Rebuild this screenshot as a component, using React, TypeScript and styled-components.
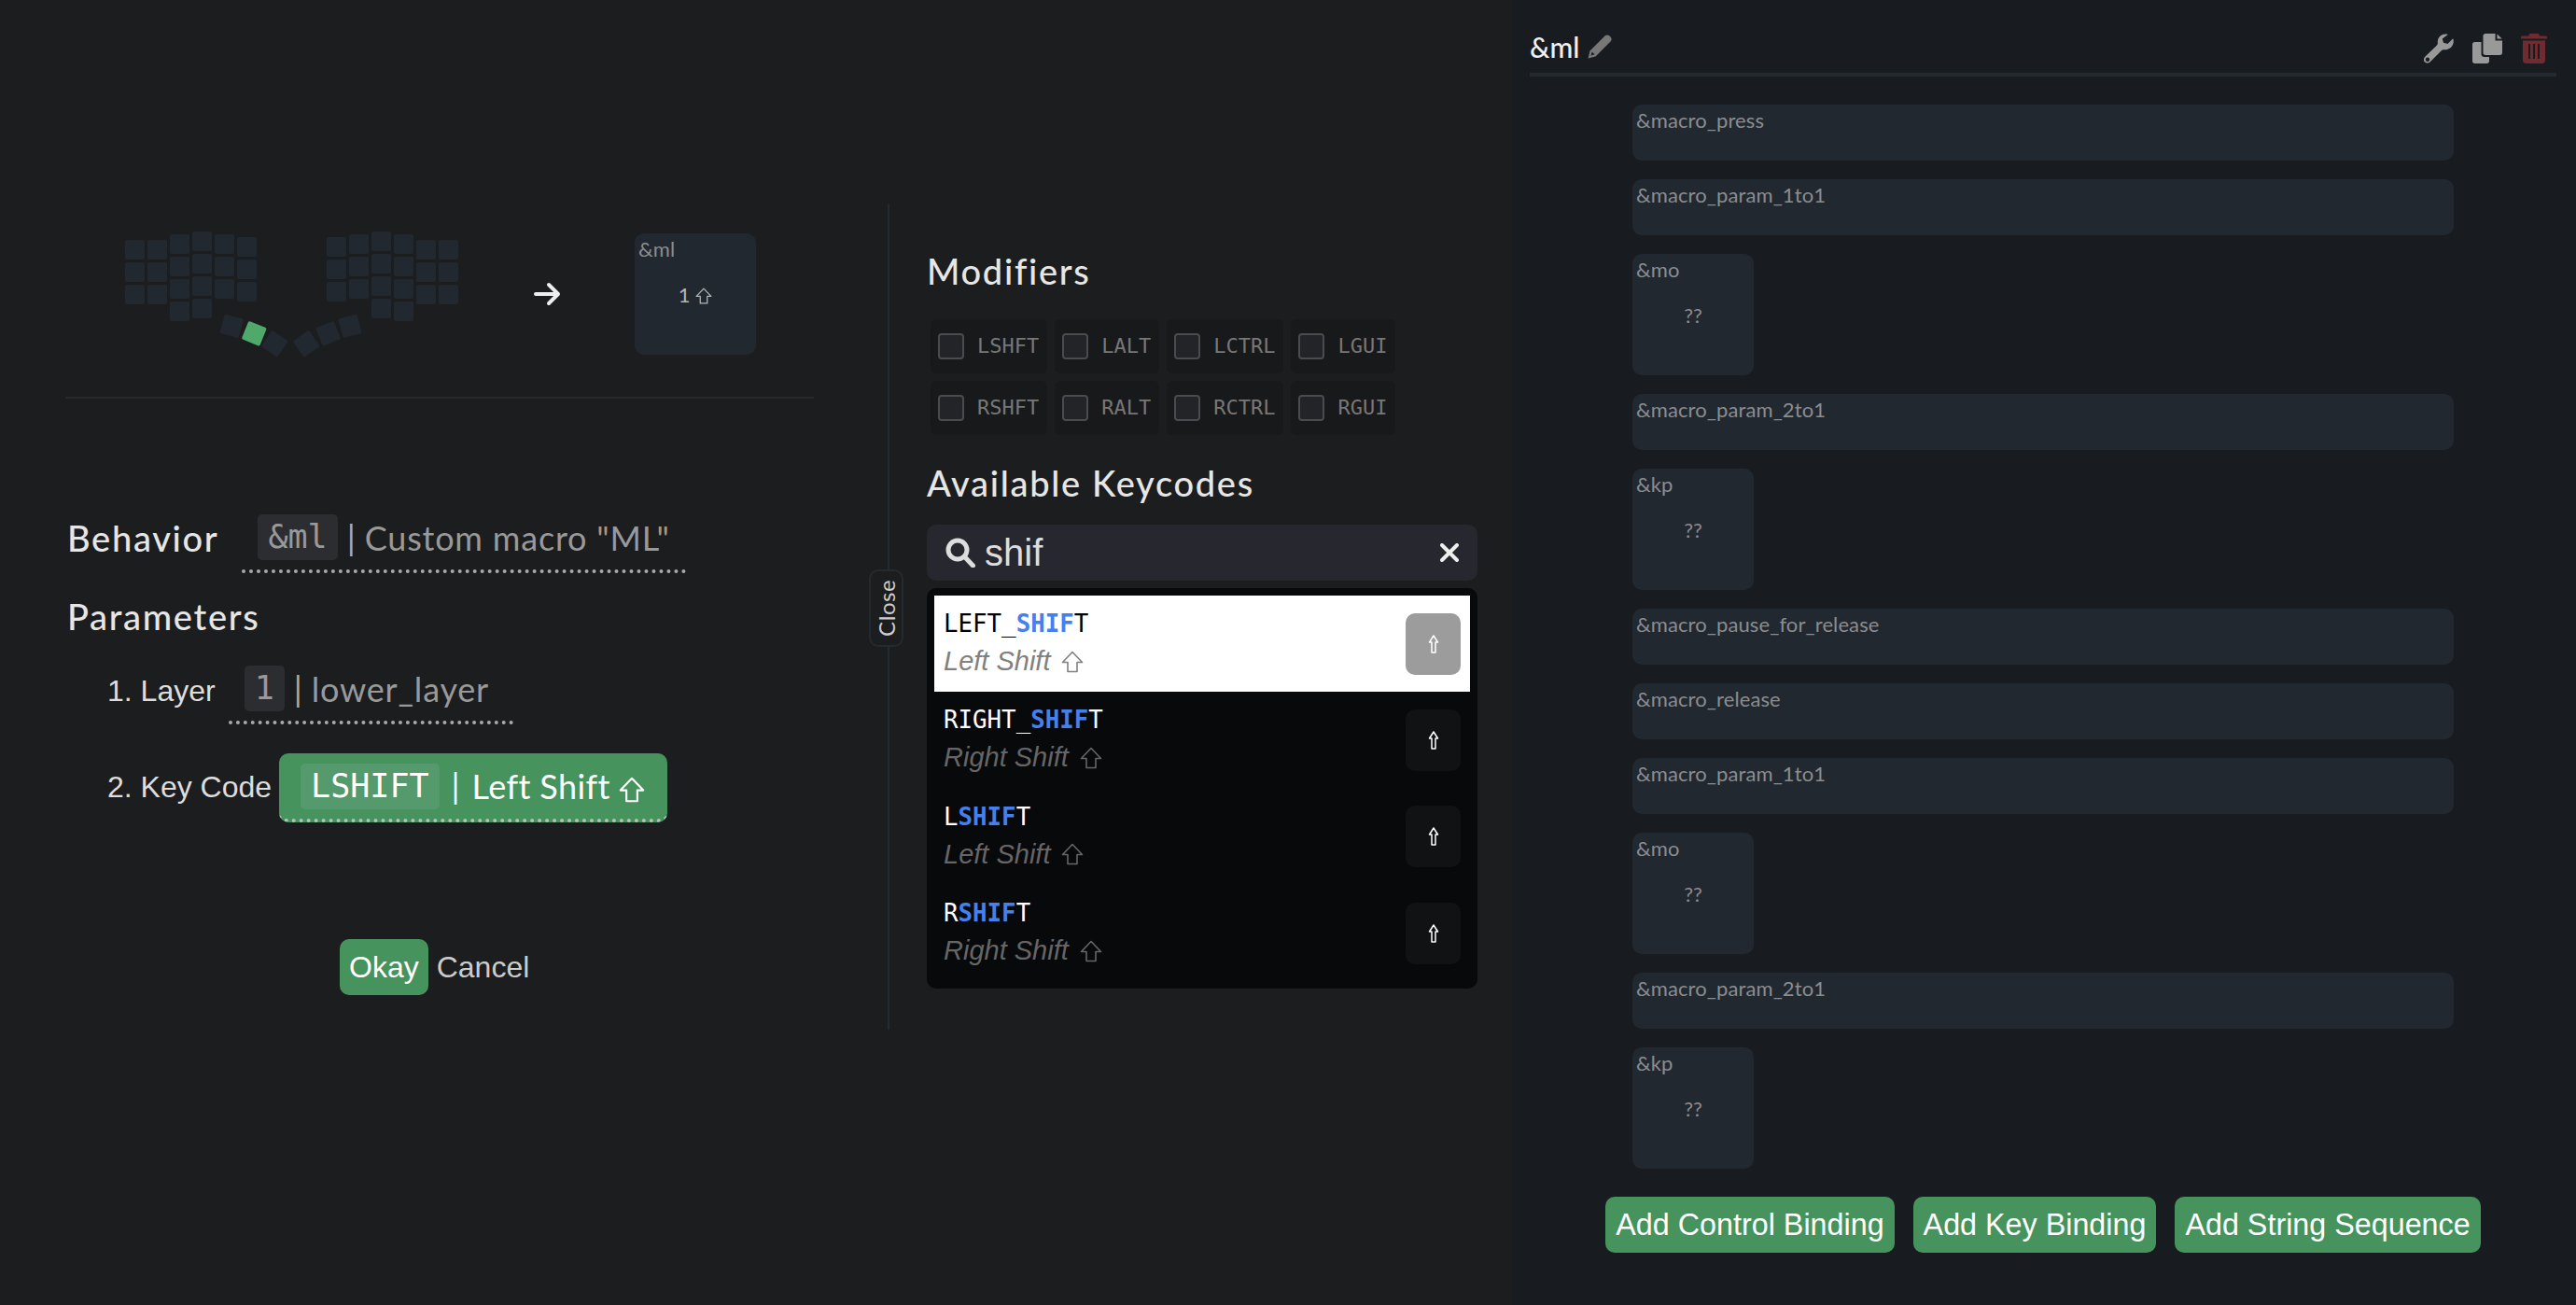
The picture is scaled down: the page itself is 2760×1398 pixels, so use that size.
import { FC } from 'react';
import styled, { createGlobalStyle } from 'styled-components';

const heading = `'Lato', 'Noto Sans', sans-serif`;
const body = `'Liberation Sans', Arial, sans-serif`;
const mono = `'DejaVu Sans Mono', monospace`;
const green = '#46935e';
const tile = '#222830';

const GlobalStyle = createGlobalStyle`
	* {
		box-sizing: border-box;
	}
	html,
	body {
		margin: 0;
		background: #1c1d1f;
	}
`;

const modifiers = [
	['LSHFT', 'LALT', 'LCTRL', 'LGUI'],
	['RSHFT', 'RALT', 'RCTRL', 'RGUI'],
];

const results = [
	{ before: 'LEFT_', after: 'T', label: 'Left Shift' },
	{ before: 'RIGHT_', after: 'T', label: 'Right Shift' },
	{ before: 'L', after: 'T', label: 'Left Shift' },
	{ before: 'R', after: 'T', label: 'Right Shift' },
];

const bindings = [
	{ name: '&macro_press', wide: true },
	{ name: '&macro_param_1to1', wide: true },
	{ name: '&mo', wide: false },
	{ name: '&macro_param_2to1', wide: true },
	{ name: '&kp', wide: false },
	{ name: '&macro_pause_for_release', wide: true },
	{ name: '&macro_release', wide: true },
	{ name: '&macro_param_1to1', wide: true },
	{ name: '&mo', wide: false },
	{ name: '&macro_param_2to1', wide: true },
	{ name: '&kp', wide: false },
];

const leftColumns = [
	{ x: 134, y: 257, rows: 3 },
	{ x: 158, y: 257, rows: 3 },
	{ x: 182, y: 251, rows: 4 },
	{ x: 206, y: 248, rows: 4 },
	{ x: 230, y: 251, rows: 3 },
	{ x: 254, y: 254, rows: 3 },
];
const rightColumns = [
	{ x: 350, y: 254, rows: 3 },
	{ x: 374, y: 251, rows: 3 },
	{ x: 398, y: 248, rows: 4 },
	{ x: 422, y: 251, rows: 4 },
	{ x: 446, y: 257, rows: 3 },
	{ x: 470, y: 257, rows: 3 },
];
const thumbs = [
	{ x: 248.3, y: 349.3, angle: 15 },
	{ x: 272.3, y: 357.3, angle: 22, active: true },
	{ x: 294.3, y: 368.3, angle: 35 },
	{ x: 328.3, y: 368.3, angle: -35 },
	{ x: 351.7, y: 357.3, angle: -22 },
	{ x: 375, y: 349.3, angle: -15 },
];

const KeymapDrawing: FC = () => (
	<svg width="366" height="140" viewBox="130 245 366 140">
		{[...leftColumns, ...rightColumns].map((col) =>
			Array.from({ length: col.rows }).map((_, i) => (
				<rect key={`${col.x}-${i}`} x={col.x} y={col.y + i * 24} width="21" height="21" rx="2" fill={tile} />
			)),
		)}
		{thumbs.map((t) => (
			<rect
				key={t.x}
				x={t.x - 10.5}
				y={t.y - 10.5}
				width="21"
				height="21"
				rx="2"
				fill={t.active ? '#4fa96b' : tile}
				transform={`rotate(${t.angle} ${t.x} ${t.y})`}
			/>
		))}
	</svg>
);

// outlined shift arrow used next to key names
const ShiftIcon: FC<{ size: number; weight?: number }> = ({ size, weight = 1.6 }) => (
	<ShiftSvg width={size} height={size} viewBox="0 0 24 24" fill="none" stroke="currentColor" strokeWidth={weight} strokeLinejoin="round">
		<path d="M12 1.5L22.5 12.5H17V22.5H7V12.5H1.5Z" />
	</ShiftSvg>
);

const NarrowShiftIcon: FC = () => (
	<svg width="12" height="20" viewBox="0 0 12 20" fill="none" stroke="currentColor" strokeWidth="1.5" strokeLinejoin="round">
		<path d="M6 1L10.5 8H8V19H4V8H1.5Z" />
	</svg>
);

const ArrowIcon: FC = () => (
	<svg width="30" height="26" viewBox="0 0 30 26" fill="none" stroke="#eee" strokeWidth="4" strokeLinecap="round" strokeLinejoin="round">
		<path d="M3 13H27M17 3L27 13L17 23" />
	</svg>
);

const SearchIcon: FC = () => (
	<svg width="32" height="32" viewBox="0 0 32 32" fill="none" stroke="#ddd" strokeWidth="5" strokeLinecap="round">
		<circle cx="13" cy="13" r="10" />
		<path d="M21 21L29.5 30" />
	</svg>
);

const CloseIcon: FC = () => (
	<svg width="20" height="20" viewBox="0 0 20 20" fill="none" stroke="#eee" strokeWidth="4" strokeLinecap="round">
		<path d="M2 2L18 18M18 2L2 18" />
	</svg>
);

const PencilIcon: FC = () => (
	<svg width="28" height="28" viewBox="0 0 28 28">
		<path
			fill="#777"
			d="M19.5 2.5C21 1 23 1 24.5 2.5L25.5 3.5C27 5 27 7 25.5 8.5L9.5 24.5L1.5 26.5L3.5 18.5Z"
		/>
		<path fill="#181c20" d="M4.5 23.5L8.5 22.3L5.7 19.5Z" />
	</svg>
);

const WrenchIcon: FC = () => (
	<svg width="32" height="32" viewBox="0 0 32 32" fill="#999">
		<path
			fillRule="evenodd"
			d="M23 0.5C18 0.5 14.5 4.5 14.8 9.5C14.9 11 14.6 12 13.5 13L1.5 24.5C-0.5 26.5 -0.5 29 1 30.5C2.5 32 5 32 7 30L18.5 18.5C19.5 17.5 20.6 17.2 22 17.3C27.5 17.5 31.8 13.5 31.8 8C31.8 7 31.6 6 31.2 5.2L25.5 11L21 9.8L19.8 5.5L25.8 0.9C24.9 0.6 24 0.5 23 0.5ZM4 25.5A2.2 2.2 0 1 0 4 29.9A2.2 2.2 0 1 0 4 25.5Z"
		/>
	</svg>
);

const CopyIcon: FC = () => (
	<svg width="32" height="32" viewBox="0 0 32 32" fill="#999">
		<path d="M14 0H24.5V7.5H32V20.5C32 22 31 23 29.5 23H14C12.5 23 11.5 22 11.5 20.5V2.5C11.5 1 12.5 0 14 0ZM26.5 0.5L31.6 5.6H26.5Z" />
		<path d="M2.5 9H9.5V22C9.5 24 11 25 12.5 25H18V29.5C18 31 17 32 15.5 32H2.5C1 32 0 31 0 29.5V11.5C0 10 1 9 2.5 9Z" />
	</svg>
);

const TrashIcon: FC = () => (
	<svg width="28" height="32" viewBox="0 0 28 32" fill="#6f2b30">
		<path d="M10 0H18C19 0 19.5 0.6 19.5 1.5V2.5H26.5C27.4 2.5 28 3.2 28 4V5.5H0V4C0 3.2 0.6 2.5 1.5 2.5H8.5V1.5C8.5 0.6 9 0 10 0Z" />
		<path
			fillRule="evenodd"
			d="M2 7.5H26V28.5C26 30.5 24.8 32 22.5 32H5.5C3.2 32 2 30.5 2 28.5ZM8 11V27H10V11ZM13 11V27H15V11ZM18 11V27H20V11Z"
		/>
	</svg>
);

const App: FC = () => (
	<Shell>
		<GlobalStyle />
		<Editor>
			<Form>
				<Preview>
					<KeymapDrawing />
					<ArrowSlot>
						<ArrowIcon />
					</ArrowSlot>
					<BigKey>
						<KeyLabel>&amp;ml</KeyLabel>
						<KeyValue>
							1 <ShiftIcon size={18} weight={1.7} />
						</KeyValue>
					</BigKey>
				</Preview>
				<FieldRow>
					<Heading>Behavior</Heading>
					<Select $left={25} $right={17}>
						<Code>&amp;ml</Code>
						<Pipe>|</Pipe>
						<SelectText>Custom macro "ML"</SelectText>
					</Select>
				</FieldRow>
				<ParamsHeading>Parameters</ParamsHeading>
				<ParamRow>
					<ParamLabel $height={54}>1. Layer</ParamLabel>
					<Select $left={14} $right={26}>
						<Code>1</Code>
						<Pipe>|</Pipe>
						<SelectText>lower_layer</SelectText>
					</Select>
				</ParamRow>
				<ParamRow $second>
					<ParamLabel $height={72}>2. Key Code</ParamLabel>
					<ActiveSelect>
						<ActiveCode>LSHIFT</ActiveCode>
						<ActivePipe>|</ActivePipe>
						<ActiveText>
							Left Shift <ShiftIcon size={28} weight={1.8} />
						</ActiveText>
					</ActiveSelect>
				</ParamRow>
				<Actions>
					<OkayButton>Okay</OkayButton>
					<CancelButton>Cancel</CancelButton>
				</Actions>
			</Form>
			<Divider>
				<CloseTab>Close</CloseTab>
			</Divider>
			<Picker>
				<PickerHeading>Modifiers</PickerHeading>
				<ModifierGrid>
					{modifiers.map((row) => (
						<ModifierRow key={row[0]}>
							{row.map((mod) => (
								<ModifierChip key={mod}>
									<CheckBox />
									<ModifierName>{mod}</ModifierName>
								</ModifierChip>
							))}
						</ModifierRow>
					))}
				</ModifierGrid>
				<KeycodesHeading>Available Keycodes</KeycodesHeading>
				<SearchBox>
					<SearchIcon />
					<SearchText>shif</SearchText>
					<ClearSlot>
						<CloseIcon />
					</ClearSlot>
				</SearchBox>
				<ResultList>
					{results.map((item, i) => (
						<ResultRow key={item.before} $selected={i === 0}>
							<ResultText>
								<ResultCode>
									{item.before}
									<Match>SHIF</Match>
									{item.after}
								</ResultCode>
								<ResultLabel $selected={i === 0}>
									{item.label}
									<LabelArrow>
										<ShiftIcon size={24} />
									</LabelArrow>
								</ResultLabel>
							</ResultText>
							<ResultKey $selected={i === 0}>
								<NarrowShiftIcon />
							</ResultKey>
						</ResultRow>
					))}
				</ResultList>
			</Picker>
		</Editor>
		<Sidebar>
			<SidebarHeader>
				<TitleWrap>
					<Title>&amp;ml</Title>
					<PencilIcon />
				</TitleWrap>
				<HeaderIcons>
					<WrenchIcon />
					<CopyIcon />
					<TrashIcon />
				</HeaderIcons>
			</SidebarHeader>
			<BindingList>
				{bindings.map((b, i) => (
					<BindingTile key={i} $wide={b.wide}>
						<KeyLabel>{b.name}</KeyLabel>
						{!b.wide && <KeyValue $dim>??</KeyValue>}
					</BindingTile>
				))}
			</BindingList>
			<AddButtons>
				<GreenButton>Add Control Binding</GreenButton>
				<GreenButton>Add Key Binding</GreenButton>
				<GreenButton>Add String Sequence</GreenButton>
			</AddButtons>
		</Sidebar>
	</Shell>
);

const Shell = styled.div`
	display: flex;
	height: 1398px;
	overflow: hidden;
`;

const Editor = styled.main`
	display: flex;
	width: 1620px;
	padding: 218px 0 0 70px;
	background: #1c1d1f;
`;

const Form = styled.section`
	width: 802px;
`;

const Preview = styled.div`
	display: flex;
	align-items: center;
	height: 209px;
	padding: 32px 0 45px 60px;
	border-bottom: 2px solid #232a30;
`;

const ArrowSlot = styled.div`
	display: flex;
	margin: 0 79px 0 75px;
`;

const ShiftSvg = styled.svg`
	vertical-align: -0.12em;
`;

const BigKey = styled.div`
	position: relative;
	display: flex;
	align-items: center;
	justify-content: center;
	width: 130px;
	height: 130px;
	border-radius: 10px;
	background: ${tile};
`;

const KeyLabel = styled.span`
	position: absolute;
	top: 3px;
	left: 4px;
	font: 22px ${heading};
	letter-spacing: 0.1px;
	color: #8a8d90;
`;

const KeyValue = styled.span<{ $dim?: boolean }>`
	font: 22px ${heading};
	color: ${({ $dim }) => ($dim ? '#8a8d90' : '#b5b5b5')};
`;

const FieldRow = styled.div`
	display: flex;
	align-items: flex-start;
	margin: 124px 0 0 2px;
`;

const Heading = styled.h2`
	margin: 0;
	font: 500 38px/50px ${heading};
	letter-spacing: 1.7px;
	color: #e6e6e6;
`;

const ParamsHeading = styled(Heading)`
	margin: 21px 0 0 2px;
`;

const Select = styled.div<{ $left: number; $right: number }>`
	display: flex;
	align-items: center;
	gap: 10px;
	margin-left: ${({ $left }) => $left}px;
	padding: 0 ${({ $right }) => $right}px 10px 17px;
	border-bottom: 4px dotted #aaa;
`;

const Code = styled.code`
	padding: 0 11px;
	height: 49px;
	border-radius: 5px;
	background: #2c2d31;
	font: 35px/49px ${mono};
	color: #999;
`;

const Pipe = styled.span`
	font: 36px ${heading};
	color: #aaa;
`;

const SelectText = styled.span`
	font: 36px ${heading};
	letter-spacing: 0.8px;
	color: #999;
`;

const ParamRow = styled.div<{ $second?: boolean }>`
	display: flex;
	align-items: flex-start;
	margin: ${({ $second }) => ($second ? '31px' : '28px')} 0 0 45px;
`;

const ParamLabel = styled.span<{ $height: number }>`
	font: 32px/${({ $height }) => $height}px ${body};
	color: #ddd;
`;

const ActiveSelect = styled.div`
	display: flex;
	align-items: center;
	gap: 13px;
	margin-left: 8px;
	height: 74px;
	padding: 0 24px 0 23px;
	border-radius: 10px;
	background: ${green};
	color: #fff;
	border-bottom: 4px dotted #bbb;
`;

const ActiveCode = styled(Code)`
	background: #559a6c;
	color: #fff;
`;

const ActivePipe = styled(Pipe)`
	color: #fff;
`;

const ActiveText = styled(SelectText)`
	letter-spacing: 0.4px;
	color: #fff;
`;

const Actions = styled.div`
	display: flex;
	align-items: center;
	gap: 9px;
	margin: 125px 0 0 294px;
`;

const OkayButton = styled.button`
	height: 60px;
	padding: 0 10px;
	border: none;
	border-radius: 10px;
	background: ${green};
	font: 32px ${body};
	color: #fff;
`;

const CancelButton = styled.button`
	padding: 0;
	border: none;
	background: none;
	font: 32px ${body};
	color: #ccc;
`;

const Divider = styled.div`
	position: relative;
	width: 2px;
	height: 885px;
	margin-left: 79px;
	background: #232a30;
`;

const CloseTab = styled.div`
	position: absolute;
	top: 392px;
	left: -20px;
	display: flex;
	align-items: center;
	justify-content: center;
	width: 37px;
	height: 83px;
	border: 2px solid #232a30;
	border-radius: 10px;
	background: #1c1d1f;
	writing-mode: vertical-rl;
	transform: rotate(180deg);
	font: 24px ${heading};
	letter-spacing: 0.6px;
	color: #ccc;
`;

const Picker = styled.section`
	width: 590px;
	margin-left: 40px;
`;

const PickerHeading = styled(Heading)`
	margin-top: 47px;
`;

const ModifierGrid = styled.div`
	display: flex;
	flex-direction: column;
	gap: 8px;
	margin: 27px 0 0 4px;
`;

const ModifierRow = styled.div`
	display: flex;
	gap: 8px;
`;

const ModifierChip = styled.label`
	display: flex;
	align-items: center;
	gap: 14px;
	height: 58px;
	padding: 0 9px 0 8px;
	border-radius: 6px;
	background: #18191b;
`;

const CheckBox = styled.span`
	width: 28px;
	height: 28px;
	border: 2px solid #4a4b4e;
	border-radius: 4px;
	background: #232427;
`;

const ModifierName = styled.span`
	padding-bottom: 2px;
	font: 22px ${mono};
	color: #777;
`;

const KeycodesHeading = styled(Heading)`
	margin-top: 26px;
`;

const SearchBox = styled.div`
	display: flex;
	align-items: center;
	gap: 10px;
	height: 60px;
	margin-top: 20px;
	padding: 0 20px;
	border-radius: 10px;
	background: #27272f;
`;

const SearchText = styled.span`
	font: 40px ${body};
	color: #ddd;
`;

const ClearSlot = styled.span`
	display: flex;
	margin-left: auto;
`;

const ResultList = styled.div`
	margin-top: 8px;
	padding: 8px;
	border-radius: 10px;
	background: #08090b;
`;

const ResultRow = styled.div<{ $selected: boolean }>`
	display: flex;
	align-items: center;
	justify-content: space-between;
	height: 103.3px;
	padding: 0 10px;
	background: ${({ $selected }) => ($selected ? '#fff' : 'transparent')};
	color: ${({ $selected }) => ($selected ? '#000' : '#fff')};
`;

const ResultText = styled.div`
	display: flex;
	flex-direction: column;
	gap: 6px;
	padding-bottom: 3px;
`;

const ResultCode = styled.span`
	font: 25.8px/34px ${mono};
`;

const Match = styled.b`
	color: #4580f0;
`;

const ResultLabel = styled.span<{ $selected: boolean }>`
	font: italic 29px/34px ${body};
	color: ${({ $selected }) => ($selected ? '#808080' : '#666')};
`;

const LabelArrow = styled.span`
	position: relative;
	top: -1px;
	margin-left: 12px;
`;

const ResultKey = styled.span<{ $selected: boolean }>`
	display: flex;
	align-items: center;
	justify-content: center;
	width: 59px;
	height: 66px;
	border-radius: 10px;
	background: ${({ $selected }) => ($selected ? '#9c9c9c' : '#111214')};
	color: #fff;
`;

const Sidebar = styled.aside`
	display: flex;
	flex-direction: column;
	width: 1140px;
	padding: 0 21px 0 19px;
	background: #181c20;
`;

const SidebarHeader = styled.header`
	display: flex;
	align-items: center;
	justify-content: space-between;
	height: 82px;
	padding: 26px 10px 0 0;
	border-bottom: 4px solid #232a30;
`;

const TitleWrap = styled.div`
	display: flex;
	align-items: center;
	gap: 8px;
	margin-bottom: 4px;
`;

const Title = styled.span`
	font: 500 30px ${heading};
	color: #f0f0f0;
`;

const HeaderIcons = styled.div`
	display: flex;
	align-items: center;
	gap: 20px;
`;

const BindingList = styled.div`
	display: flex;
	flex-direction: column;
	gap: 20px;
	width: 880px;
	margin: 30px 0 0 110px;
`;

const BindingTile = styled.div<{ $wide: boolean }>`
	position: relative;
	display: flex;
	align-items: center;
	justify-content: center;
	width: ${({ $wide }) => ($wide ? '880px' : '130px')};
	height: ${({ $wide }) => ($wide ? '60px' : '130px')};
	border-radius: 10px;
	background: ${tile};
`;

const AddButtons = styled.div`
	display: flex;
	justify-content: center;
	gap: 20px;
	margin-top: 30px;
`;

const GreenButton = styled.button`
	height: 60px;
	padding: 0 11px;
	border: none;
	border-radius: 10px;
	background: ${green};
	font: 32.3px ${body};
	color: #fff;
`;

export default App;
